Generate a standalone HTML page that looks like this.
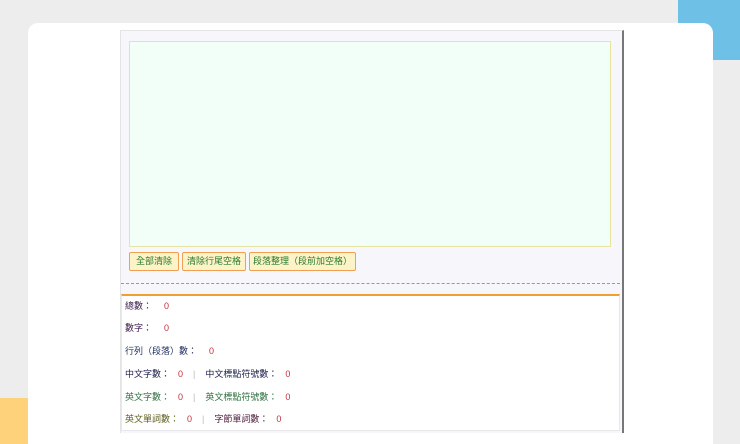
<html><head><style>
html,body{margin:0;width:740px;height:444px;overflow:hidden}
body{background:#ededed;font-family:"Liberation Sans","Noto Sans CJK TC",sans-serif;position:relative}
.blue{position:absolute;left:678px;top:-20px;width:90px;height:80px;background:#6ec0e6;border-radius:18px}
.yel{position:absolute;left:0;top:398px;width:28px;height:46px;background:#fdd27a}
.card{position:absolute;left:28px;top:23px;width:685px;height:421px;background:#fff;border-radius:10px 10px 0 0}
.panel{position:absolute;left:120px;top:30px;width:501px;height:402px;background:#f7f7fb;border-right:2px solid #777;border-left:1px solid #e4e4e4;border-top:1px solid #e4e4e4}
.ta{position:absolute;left:8px;top:10px;width:480px;height:204px;background:#f1fff8;border:1px solid #e6e4a0}
.btn{position:absolute;top:221px;height:17px;background:#fdf3c8;border:1px solid #f0a050;border-radius:2px;font-size:9px;color:#2a7a2a;line-height:17px;text-align:center}
.dash{position:absolute;left:0;top:252px;width:499px;border-top:1px dashed #999}
.low{position:absolute;left:0;top:263px;width:497px;height:134px;background:#fff;border:1px solid #e8e8e8;border-top:2px solid #f0a030}
.r{position:absolute;left:3px;font-size:9px;white-space:nowrap}
.z{color:#c03040;margin-left:12px}
.s{color:#bbb;margin:0 10px}
</style></head><body>
<div class="blue"></div><div class="yel"></div>
<div class="card"></div>
<div class="panel">
<div class="ta"></div>
<div class="btn" style="left:8px;width:48px">全部清除</div>
<div class="btn" style="left:61px;width:62px">清除行尾空格</div>
<div class="btn" style="left:128px;width:105px">段落整理（段前加空格）</div>
<div class="dash"></div>
<div class="low">
<div class="r" style="top:3px;color:#402050">總數：<span class="z">0</span></div>
<div class="r" style="top:25px;color:#402050">數字：<span class="z">0</span></div>
<div class="r" style="top:48px;color:#203060">行列（段落）數：<span class="z">0</span></div>
<div class="r" style="top:71px;color:#202050">中文字數：<span class="z" style="margin-left:8px">0</span><span class="s">|</span>中文標點符號數：<span class="z" style="margin-left:8px">0</span></div>
<div class="r" style="top:94px;color:#307040">英文字數：<span class="z" style="margin-left:8px">0</span><span class="s">|</span>英文標點符號數：<span class="z" style="margin-left:8px">0</span></div>
<div class="r" style="top:116px;color:#606020">英文單詞數：<span class="z" style="margin-left:8px">0</span><span class="s">|</span><span style="color:#502040">字節單詞數：</span><span class="z" style="margin-left:8px">0</span></div>
</div>
</div>
</body></html>
